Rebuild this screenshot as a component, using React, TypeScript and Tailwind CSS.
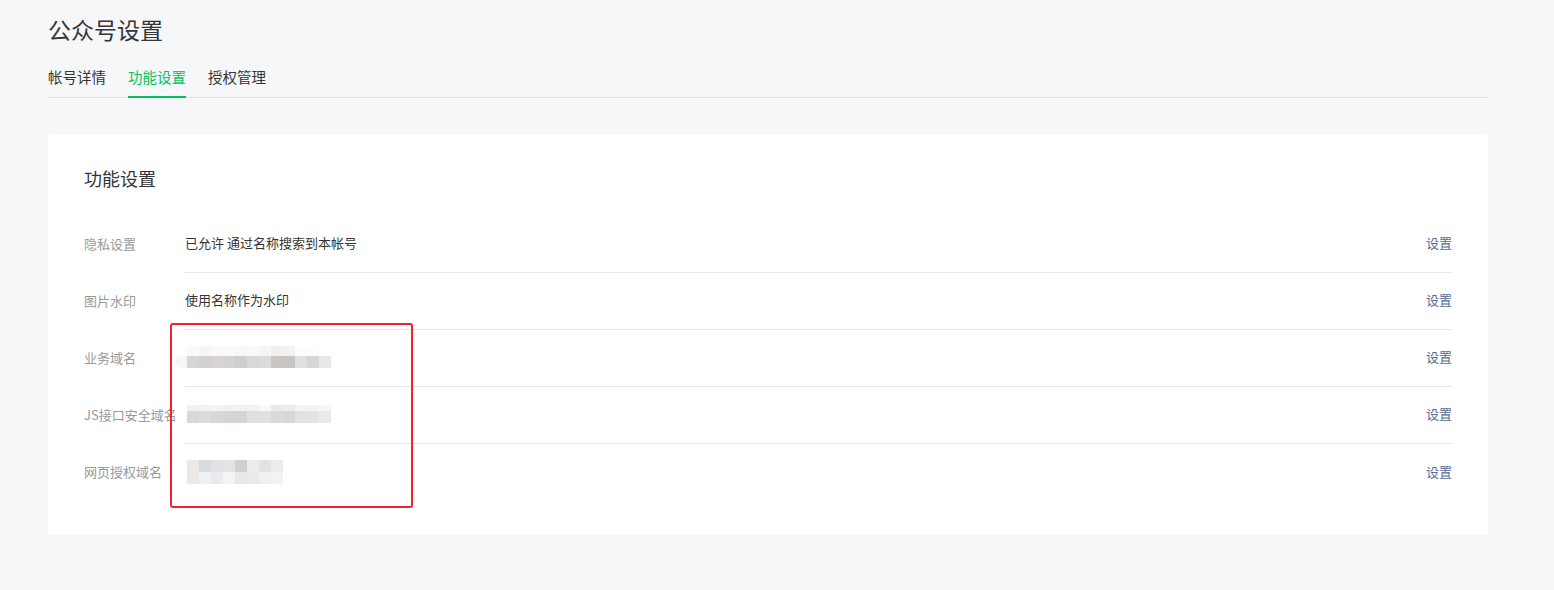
import React from 'react';

// 打码后的色块（两行像素格）
const blurRows: Record<string, { top: string[]; bottom: string[]; lead?: boolean; topH: number; botH: number }> = {
  domain: {
    top: ['#f9f9f9', '#f6f6f6', '#f9f9f9', '#fafafa', '#f8f8f8', '#f9f9f9', '#f5f5f5', '#f0f0f0', '#f2f2f2', '#fcfcfc', '#fdfdfd'],
    bottom: ['#d6d6d6', '#d1d1d5', '#d7d3d1', '#d4d2d4', '#cecece', '#d8dada', '#dadcdc', '#cac6c4', '#c6c6c8', '#e0e0e0', '#d8d6d4', '#e8e8ec'],
    lead: true,
    topH: 10,
    botH: 12,
  },
  js: {
    top: ['#f0f0f0', '#f2f2f2', '#f4f4f4', '#f1f1f1', '#f2f2f4', '#f0f2f4', '#f7f8f8', '#eaeaea', '#ececec', '#f4f4f4', '#f2f2f2', '#f6f6f6'],
    bottom: ['#d8d8d8', '#dcdcdc', '#d8d8d8', '#d6d4d6', '#d4d4d6', '#e0e0de', '#dee0e2', '#dcdad8', '#d8d6d6', '#e2e2e2', '#e4e4e2', '#eaeaee'],
    topH: 6,
    botH: 12,
  },
  oauth: {
    top: ['#ece8e6', '#d8dcde', '#e2e2e6', '#e6e2e2', '#d0d0d0', '#ececee', '#e2e2e4', '#ececec'],
    bottom: ['#ebe9e8', '#f0f2f2', '#eaeaea', '#f4f4f2', '#e8e8e8', '#eaeaea', '#f0f0f0', '#f2f2f2'],
    topH: 12,
    botH: 12,
  },
};

const Mosaic: React.FC<{ kind: keyof typeof blurRows }> = ({ kind }) => {
  const d = blurRows[kind];
  return (
    <div className={d.lead ? 'flex items-end blur-[0.6px] -ml-[10px]' : 'flex items-end blur-[0.6px] ml-0.5'}>
      {d.lead && <div className="w-3 h-3 bg-[#f6f6f6] rounded-l-full" />}
      <div className="flex flex-col">
        <div className="flex">
          {d.top.map((c, i) => (
            <div key={i} className="w-3" style={{ background: c, height: d.topH }} />
          ))}
        </div>
        <div className="flex">
          {d.bottom.map((c, i) => (
            <div key={i} className="w-3" style={{ background: c, height: d.botH }} />
          ))}
        </div>
      </div>
    </div>
  );
};

type Row = { label: string; value: React.ReactNode };

const rows: Row[] = [
  { label: '隐私设置', value: '已允许 通过名称搜索到本帐号' },
  { label: '图片水印', value: '使用名称作为水印' },
  { label: '业务域名', value: <Mosaic kind="domain" /> },
  { label: 'JS接口安全域名', value: <Mosaic kind="js" /> },
  { label: '网页授权域名', value: <Mosaic kind="oauth" /> },
];

const tabs = ['帐号详情', '功能设置', '授权管理'];

export default function App() {
  return (
    <div
      className="min-h-[590px] bg-[#f6f7f9] pt-[13px] pl-12 text-[#353535]"
      style={{ fontFamily: '"Noto Sans CJK SC", "Liberation Sans", sans-serif' }}
    >
      <div className="w-[1440px]">
        <h1 className="text-[23px] leading-8 font-normal">公众号设置</h1>

        <div className="mt-[22px] flex gap-[22px] border-b border-[#e2e3e5]">
          {tabs.map((t, i) => (
            <div
              key={t}
              className={
                i === 1
                  ? 'text-[14.5px] leading-5 pb-[9px] -mb-px border-b-2 border-[#07c160] text-[#07c160]'
                  : 'text-[14.5px] leading-5 pb-[9px] -mb-px border-b-2 border-transparent'
              }
            >
              {t}
            </div>
          ))}
        </div>

        <div className="relative mt-9 bg-white rounded px-9 pt-[30px] pb-[34px]">
          <h2 className="text-lg leading-7 font-normal">功能设置</h2>

          <div className="mt-6">
            {rows.map((r, i) => (
              <div key={r.label} className="flex h-[57px]">
                <div className="w-[101px] shrink-0 flex items-center pb-0.5 text-[13px] text-[#9a9a9a] whitespace-nowrap">
                  {r.label}
                </div>
                <div
                  className={
                    i < rows.length - 1
                      ? 'flex-1 flex items-center justify-between pb-0.5 border-b border-[#e7e7e7]'
                      : 'flex-1 flex items-center justify-between pb-0.5'
                  }
                >
                  <div className="text-[13px]">{r.value}</div>
                  <a className="text-[13px] text-[#576b95] cursor-pointer">设置</a>
                </div>
              </div>
            ))}
          </div>

          {/* 标注框 */}
          <div className="absolute left-[122px] top-[189px] w-[243px] h-[185px] border-2 border-[#f5222d] rounded-[3px]" />
        </div>
      </div>
    </div>
  );
}
